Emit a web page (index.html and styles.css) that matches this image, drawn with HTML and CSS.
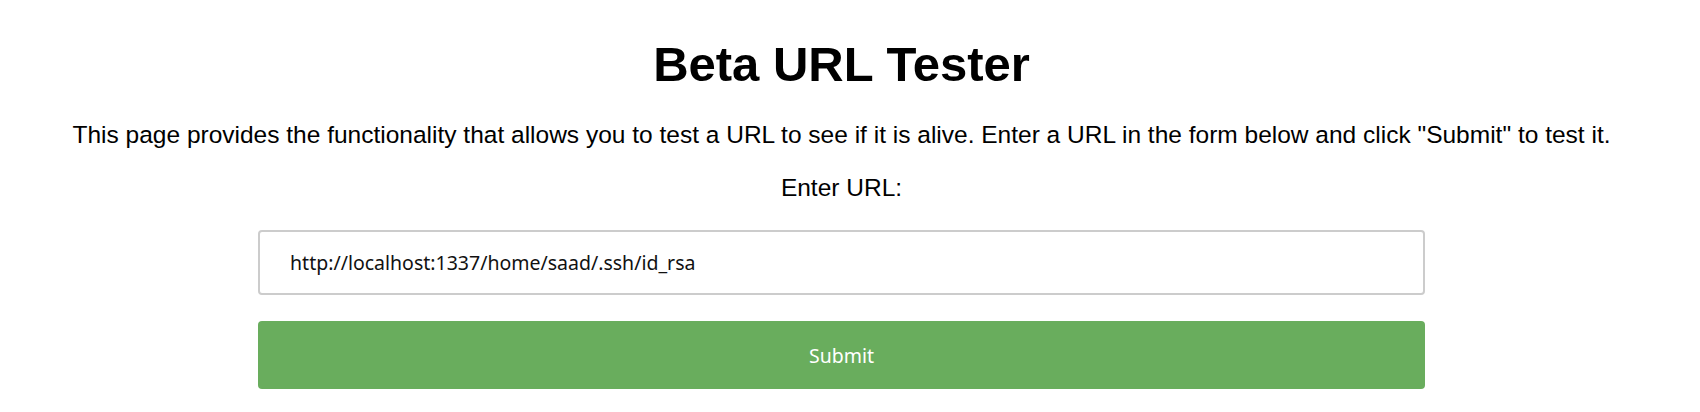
FILE: index.html
```html
<!DOCTYPE html>
<html>
<head>
<meta charset="utf-8">
<title>Beta URL Tester</title>
<link rel="stylesheet" href="styles.css">
</head>
<body>
<main class="page">
  <h1 class="title">Beta URL Tester</h1>
  <p class="intro">This page provides the functionality that allows you to test a URL to see if it is alive. Enter a URL in the form below and click "Submit" to test it.</p>
  <form class="form">
    <label class="label" for="url">Enter URL:</label>
    <input class="url-input" id="url" type="text" value="http://localhost:1337/home/saad/.ssh/id_rsa">
    <button class="submit" type="button">Submit</button>
  </form>
</main>
</body>
</html>
```

FILE: styles.css
```css
html, body {
  overflow: hidden;
}
body {
  margin: 8px 25px 8px 8px;
  background: #fff;
  font-family: "Liberation Sans", Arial, sans-serif;
  color: #000;
}
.page {
  display: flex;
  flex-direction: column;
  align-items: center;
}
.title {
  margin: 28px 0 0;
  font-size: 49px;
  font-weight: bold;
  line-height: 56px;
}
.intro {
  margin: 29px 0 0;
  font-size: 24.5px;
  line-height: 28px;
  text-align: center;
}
.form {
  width: 70%;
  display: flex;
  flex-direction: column;
  align-items: stretch;
}
.label {
  margin-top: 25px;
  font-size: 24.5px;
  line-height: 28px;
  text-align: center;
}
.url-input {
  box-sizing: border-box;
  margin-top: 28px;
  height: 65px;
  padding: 0 30px;
  border: 2px solid #ccc;
  border-radius: 4px;
  font-family: "Noto Sans", "Open Sans", sans-serif;
  font-size: 19.5px;
  color: #111;
  background: #fff;
}
.submit {
  box-sizing: border-box;
  margin-top: 26px;
  height: 68px;
  border: none;
  border-radius: 4px;
  background: #69ad5d;
  color: #fff;
  font-family: "Noto Sans", "Open Sans", sans-serif;
  font-size: 19.5px;
}
```
